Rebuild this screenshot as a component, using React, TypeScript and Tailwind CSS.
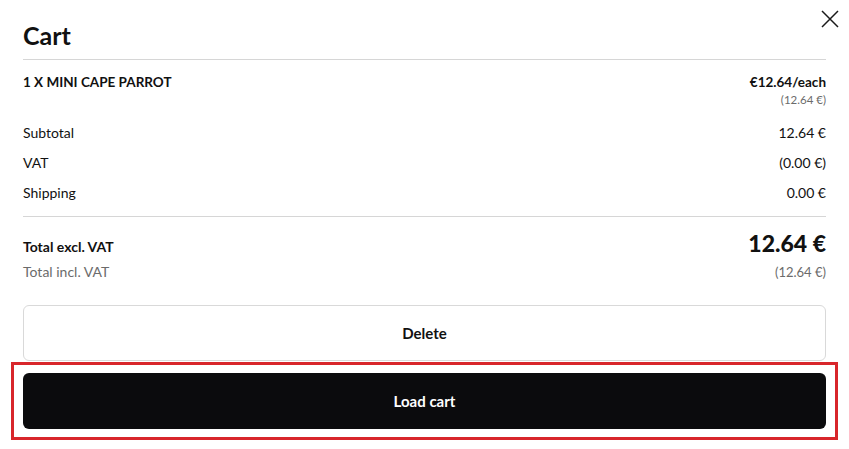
import React from 'react'

type Line = { label: string; value: string }

const lines: Line[] = [
  { label: 'Subtotal', value: '12.64 €' },
  { label: 'VAT', value: '(0.00 €)' },
  { label: 'Shipping', value: '0.00 €' },
]

function CloseIcon() {
  return (
    <svg width="18" height="18" viewBox="0 0 18 18" fill="none" stroke="#1a1a1a" strokeWidth="1.5">
      <path d="M1 1L17 17M17 1L1 17" />
    </svg>
  )
}

export default function App() {
  return (
    <div
      className="relative min-h-[449px] w-full bg-white px-[23px] pt-[19px] text-[#111]"
      style={{ fontFamily: 'Lato, "Open Sans", sans-serif' }}
    >
      <button className="absolute right-[10px] top-[10px]" aria-label="Close">
        <CloseIcon />
      </button>

      <h2 className="border-b border-[#d6d6d6] pb-2 text-[25px] font-bold leading-[32px]">Cart</h2>

      <div className="flex justify-between pt-3">
        <div className="text-[13.5px] font-bold uppercase leading-5">1 x Mini Cape Parrot</div>
        <div className="flex flex-col items-end">
          <div className="text-[13.5px] font-bold leading-5">€12.64/each</div>
          <div className="text-[11.5px] leading-4 text-[#6b6b6b]">(12.64 €)</div>
        </div>
      </div>

      <div className="mt-[15px] flex flex-col gap-[10px] border-b border-[#d6d6d6] pb-[13px]">
        {lines.map((l) => (
          <div key={l.label} className="flex justify-between text-[14px] leading-5">
            <span>{l.label}</span>
            <span>{l.value}</span>
          </div>
        ))}
      </div>

      <div className="mt-3 flex items-baseline justify-between">
        <span className="text-[14px] font-bold">Total excl. VAT</span>
        <span className="text-[23px] font-black leading-7">12.64 €</span>
      </div>
      <div className="mt-[5px] flex justify-between text-[14px] leading-5 text-[#6b6b6b]">
        <span>Total incl. VAT</span>
        <span className="text-[13px]">(12.64 €)</span>
      </div>

      <button className="mt-[23px] flex h-14 w-full items-center justify-center rounded-md border border-[#d9d9d9] bg-white text-[15px] font-bold">
        Delete
      </button>

      <div className="-mx-3 mt-px border-[3px] border-[#d8262b] px-[9px] py-2">
        <button className="flex h-14 w-full items-center justify-center rounded-md bg-[#0b0b0d] text-[15px] font-bold text-white">
          Load cart
        </button>
      </div>
    </div>
  )
}
